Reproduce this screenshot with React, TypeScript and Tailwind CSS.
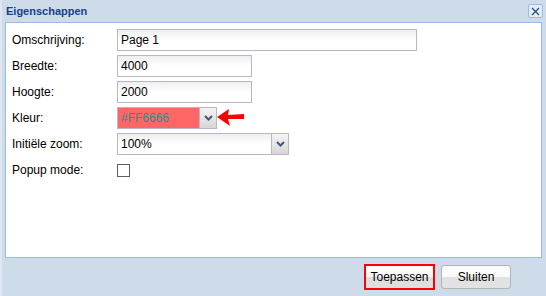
import { ReactNode } from "react";

const font = { fontFamily: '"Liberation Sans", Arial, sans-serif' };

const Row = ({ label, children }: { label: string; children: ReactNode }) => (
	<div className="flex h-[22px] items-center">
		<div className="w-[105px] text-[12px] text-black">{label}</div>
		{children}
	</div>
);

const TextField = ({ value, width }: { value: string; width: string }) => (
	<div
		className={`${width} flex h-[22px] items-center border border-[#b5b8c8] bg-gradient-to-b from-[#eeeeee] via-white to-white pl-[3px] text-[12px] text-black`}
	>
		{value}
	</div>
);

const Trigger = () => (
	<div className="flex h-full w-[17px] items-center justify-center border-l border-[#b5b8c8] bg-gradient-to-b from-[#f4f4f4] to-[#d6d6d6]">
		<svg width="9" height="6" viewBox="0 0 9 6">
			<path d="M1 1 L4.5 4.5 L8 1" fill="none" stroke="#3b5a82" strokeWidth="2" />
		</svg>
	</div>
);

export default function App() {
	return (
		<div
			className="flex h-[296px] w-[546px] flex-col border-l-2 border-[#dfe8f2] bg-[#cedbe9]"
			style={font}
		>
			{/* header */}
			<div className="flex h-[22px] items-center justify-between pl-[4px] pr-[3px]">
				<span className="text-[11px] font-bold text-[#15428b]">Eigenschappen</span>
				<div className="flex h-[14px] w-[15px] items-center justify-center rounded-[2px] border border-[#99bbe8] bg-[#e4ecf7]">
					<svg width="9" height="9" viewBox="0 0 9 9">
						<path d="M1 1 L8 8 M8 1 L1 8" stroke="#2b4f80" strokeWidth="1.3" />
					</svg>
				</div>
			</div>

			{/* body */}
			<div className="ml-[3px] mr-[4px] flex h-[236px] flex-col gap-[4px] border border-[#99bbe8] bg-white pl-[6px] pt-[6px]">
				<Row label="Omschrijving:">
					<TextField value="Page 1" width="w-[300px]" />
				</Row>
				<Row label="Breedte:">
					<TextField value="4000" width="w-[135px]" />
				</Row>
				<Row label="Hoogte:">
					<TextField value="2000" width="w-[135px]" />
				</Row>
				<Row label="Kleur:">
					<div className="flex h-[22px] w-[100px] border border-[#b5b8c8]">
						<div className="flex flex-1 items-center bg-[#ff6666] pl-[3px] text-[12px] text-[#2e8d8d]">
							#FF6666
						</div>
						<Trigger />
					</div>
					<svg width="28" height="20" viewBox="0 0 28 20">
						<path d="M0 9 L12 1 L11 7 L27 6 L27 11 L11 11 L13 18 Z" fill="#ff0000" />
					</svg>
				</Row>
				<Row label="Initiële zoom:">
					<div className="flex h-[22px] w-[172px] border border-[#b5b8c8]">
						<div className="flex flex-1 items-center bg-gradient-to-b from-[#eeeeee] via-white to-white pl-[3px] text-[12px] text-black">
							100%
						</div>
						<Trigger />
					</div>
				</Row>
				<Row label="Popup mode:">
					<div className="h-[13px] w-[13px] border border-[#5f5f5f] bg-white" />
				</Row>
			</div>

			{/* footer */}
			<div className="flex flex-1 items-center justify-end gap-[6px] pr-[35px]">
				<div className="flex h-[26px] w-[71px] items-center justify-center border-2 border-[#ff0000]">
					<div className="flex h-full w-full items-center justify-center bg-gradient-to-b from-[#fafafa] from-50% to-[#dedede] to-50% text-[12px] text-black">
						Toepassen
					</div>
				</div>
				<div className="flex h-[24px] w-[70px] items-center justify-center rounded-[3px] border border-[#b3b3b3] bg-gradient-to-b from-[#fafafa] from-50% to-[#e2e2e2] to-50% text-[12px] text-black">
					Sluiten
				</div>
			</div>
		</div>
	);
}
